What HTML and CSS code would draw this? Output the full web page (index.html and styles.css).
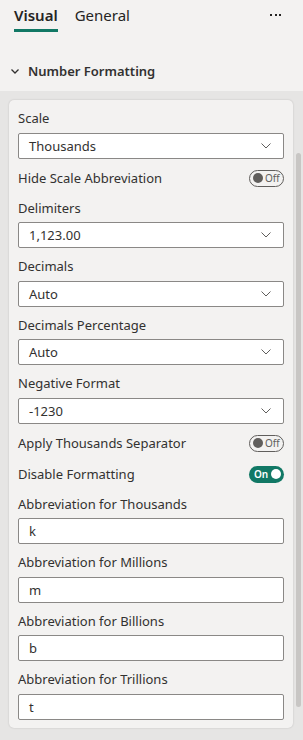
FILE: index.html
```html
<!DOCTYPE html>
<html>
<head>
    <meta charset="UTF-8">
    <meta name="viewport" content="width=device-width, initial-scale=1.0">
    <title>Format pane - Number Formatting</title>
    <link rel="stylesheet" href="styles.css">
</head>
<body>
    <div class="pane">
        <div class="tabs">
            <div class="tab active">Visual</div>
            <div class="tab">General</div>
            <div class="more"><i></i><i></i><i></i></div>
        </div>

        <div class="section-head">
            <svg class="chev" width="8" height="5" viewBox="0 0 8 5"><path d="M0.5 0.5 L4 4 L7.5 0.5" fill="none" stroke="#323130" stroke-width="1.3"/></svg>
            <span>Number Formatting</span>
        </div>

        <div class="section-body">
            <div class="card">
                <div class="field">
                    <label>Scale</label>
                    <div class="select">Thousands<svg width="10" height="6" viewBox="0 0 10 6"><path d="M0.5 0.5 L5 5 L9.5 0.5" fill="none" stroke="#605e5c" stroke-width="1"/></svg></div>
                </div>
                <div class="toggle-row">
                    <span>Hide Scale Abbreviation</span>
                    <span class="toggle off"><i></i>Off</span>
                </div>
                <div class="field">
                    <label>Delimiters</label>
                    <div class="select">1,123.00<svg width="10" height="6" viewBox="0 0 10 6"><path d="M0.5 0.5 L5 5 L9.5 0.5" fill="none" stroke="#605e5c" stroke-width="1"/></svg></div>
                </div>
                <div class="field">
                    <label>Decimals</label>
                    <div class="select">Auto<svg width="10" height="6" viewBox="0 0 10 6"><path d="M0.5 0.5 L5 5 L9.5 0.5" fill="none" stroke="#605e5c" stroke-width="1"/></svg></div>
                </div>
                <div class="field">
                    <label>Decimals Percentage</label>
                    <div class="select">Auto<svg width="10" height="6" viewBox="0 0 10 6"><path d="M0.5 0.5 L5 5 L9.5 0.5" fill="none" stroke="#605e5c" stroke-width="1"/></svg></div>
                </div>
                <div class="field">
                    <label>Negative Format</label>
                    <div class="select">-1230<svg width="10" height="6" viewBox="0 0 10 6"><path d="M0.5 0.5 L5 5 L9.5 0.5" fill="none" stroke="#605e5c" stroke-width="1"/></svg></div>
                </div>
                <div class="toggle-row">
                    <span>Apply Thousands Separator</span>
                    <span class="toggle off"><i></i>Off</span>
                </div>
                <div class="toggle-row">
                    <span>Disable Formatting</span>
                    <span class="toggle on">On<i></i></span>
                </div>
                <div class="field">
                    <label>Abbreviation for Thousands</label>
                    <div class="text-input">k</div>
                </div>
                <div class="field">
                    <label>Abbreviation for Millions</label>
                    <div class="text-input">m</div>
                </div>
                <div class="field">
                    <label>Abbreviation for Billions</label>
                    <div class="text-input">b</div>
                </div>
                <div class="field">
                    <label>Abbreviation for Trillions</label>
                    <div class="text-input">t</div>
                </div>
            </div>
            <div class="scrollbar"></div>
        </div>
    </div>
</body>
</html>
```

FILE: styles.css
```css
body {
    margin: 0;
    font-family: "Noto Sans", "Open Sans", sans-serif;
    color: #252423;
    background-color: #e6e5e4;
}

.pane {
    width: 303px;
    height: 740px;
    display: flex;
    flex-direction: column;
}

.tabs {
    display: flex;
    align-items: flex-start;
    gap: 17px;
    padding: 4px 14px 0 14px;
    height: 51px;
    box-sizing: border-box;
    background-color: #f3f2f1;
}

.tab {
    font-size: 15px;
    line-height: 22px;
    padding-bottom: 3px;
    border-bottom: 3px solid transparent;
}

.tab.active {
    font-weight: 600;
    border-bottom-color: #117865;
}

.more {
    margin-left: auto;
    margin-right: 8px;
    margin-top: 10px;
    display: flex;
    gap: 2.5px;
}

.more i {
    display: block;
    width: 2px;
    height: 2px;
    background-color: #252423;
}

.section-head {
    display: flex;
    align-items: center;
    gap: 9px;
    height: 40px;
    padding-left: 11px;
    background-color: #f3f2f1;
    font-size: 13px;
    font-weight: 600;
    color: #323130;
}

.section-body {
    position: relative;
    flex: 1;
    padding: 9px 10px 0 9px;
}

.card {
    background-color: #f3f2f1;
    border-radius: 5px;
    box-shadow: 0 0 2px rgba(0,0,0,0.18);
    padding: 8px 9px 8px 9px;
    display: flex;
    flex-direction: column;
    gap: 8px;
}

.field label {
    display: block;
    font-size: 13px;
    line-height: 20px;
    margin-bottom: 4.5px;
    color: #323130;
}

.select,
.text-input {
    height: 26px;
    box-sizing: border-box;
    border: 1px solid #8a8886;
    border-radius: 2px;
    background-color: white;
    padding: 0 12px 0 10px;
    font-size: 13px;
    line-height: 24px;
    color: #323130;
}

.select {
    display: flex;
    align-items: center;
    justify-content: space-between;
}

.toggle-row {
    display: flex;
    align-items: center;
    justify-content: space-between;
    height: 23px;
    font-size: 13px;
    color: #323130;
}

.toggle {
    display: flex;
    align-items: center;
    gap: 2px;
    height: 17px;
    width: 35px;
    box-sizing: border-box;
    border-radius: 9px;
    font-size: 10px;
    padding: 0 3px;
}

.toggle i {
    display: block;
    width: 10px;
    height: 10px;
    border-radius: 50%;
}

.toggle.off {
    border: 1px solid #605e5c;
    color: #605e5c;
}

.toggle.off i {
    background-color: #605e5c;
}

.toggle.on {
    background-color: #117865;
    color: white;
    font-weight: 600;
    justify-content: space-between;
    padding: 0 3px 0 5px;
}

.toggle.on i {
    background-color: white;
}

.scrollbar {
    position: absolute;
    right: 2px;
    top: 62px;
    width: 5px;
    height: 554px;
    border-radius: 3px;
    background-color: #c8c6c4;
}
```
